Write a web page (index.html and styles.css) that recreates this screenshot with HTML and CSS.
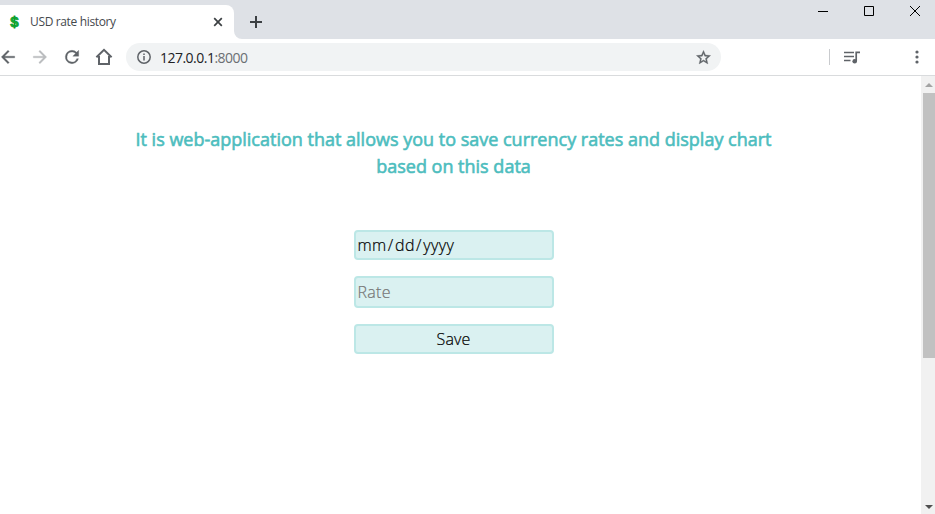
FILE: index.html
```html
<!DOCTYPE html>
<html lang="en">
<head>
<meta charset="utf-8">
<title>USD rate history</title>
<link rel="stylesheet" href="styles.css">
</head>
<body>
<div class="browser">
  <header class="tabstrip">
    <div class="tab">
      <span class="favicon">$</span>
      <span class="tab-title">USD rate history</span>
      <svg class="tab-close" width="10" height="10" viewBox="0 0 10 10"><path d="M1.2 1.2l7.6 7.6M8.8 1.2l-7.6 7.6"/></svg>
    </div>
    <svg class="tab-curve" width="8" height="8" viewBox="0 0 8 8"><path d="M0 0a8 8 0 0 0 8 8H0z"/></svg>
    <svg class="new-tab" width="12" height="12" viewBox="0 0 12 12"><path d="M6 0v12M0 6h12"/></svg>
    <div class="window-controls">
      <svg width="10" height="10" viewBox="0 0 10 10"><path d="M0 5.5h10"/></svg>
      <svg width="10" height="10" viewBox="0 0 10 10"><path d="M.5.5h9v9h-9z"/></svg>
      <svg width="10" height="10" viewBox="0 0 10 10"><path d="M0 0l10 10M10 0L0 10"/></svg>
    </div>
  </header>
  <nav class="toolbar">
    <svg class="icon" width="20" height="20" viewBox="0 0 24 24"><path d="M20 11H7.83l5.59-5.59L12 4l-8 8 8 8 1.41-1.41L7.83 13H20z"/></svg>
    <svg class="icon disabled" width="20" height="20" viewBox="0 0 24 24"><path d="M4 11h12.17l-5.59-5.59L12 4l8 8-8 8-1.41-1.41L16.17 13H4z"/></svg>
    <svg class="icon" width="20" height="20" viewBox="0 0 24 24"><path d="M17.65 6.35A7.96 7.96 0 0 0 12 4a8 8 0 1 0 7.73 10h-2.08A6 6 0 1 1 12 6c1.66 0 3.14.69 4.22 1.78L13 11h7V4z"/></svg>
    <svg class="icon home" width="18" height="18" viewBox="0 0 18 18"><path d="M1.4 9.3L9 1.9l7.6 7.4M4 8v8h10V8"/></svg>
    <div class="address">
      <svg class="info" width="14" height="14" viewBox="0 0 14 14"><circle cx="7" cy="7" r="6.2"/><path d="M7 6v4.5M7 3.5v1.6"/></svg>
      <span class="url">127.0.0.1<span class="port">:8000</span></span>
      <svg class="star" width="17" height="17" viewBox="0 0 24 24"><path d="M22 9.24l-7.19-.62L12 2 9.19 8.63 2 9.24l5.46 4.73L5.82 21 12 17.27 18.18 21l-1.63-7.03zM12 15.4l-3.76 2.27 1-4.28-3.32-2.88 4.38-.38L12 6.1l1.71 4.04 4.38.38-3.32 2.88 1 4.28z"/></svg>
    </div>
    <span class="divider"></span>
    <svg class="media" width="16" height="13" viewBox="0 0 16 13"><path d="M0 1.5h10M0 5.5h10M0 9.5h6.5M12.2 10V1.3H16"/><circle cx="10.7" cy="10.2" r="2.3"/></svg>
    <svg class="menu" width="4" height="14" viewBox="0 0 4 14"><circle cx="2" cy="2" r="1.6"/><circle cx="2" cy="7" r="1.6"/><circle cx="2" cy="12" r="1.6"/></svg>
  </nav>
  <div class="viewport">
    <main class="page">
      <h1 class="heading">It is web-application that allows you to save currency rates and display chart<br>based on this data</h1>
      <form class="form">
        <div class="field date">mm<span class="slash">/</span>dd<span class="slash">/</span>yyyy</div>
        <input class="field rate" type="text" placeholder="Rate">
        <button class="field save" type="button">Save</button>
      </form>
    </main>
    <div class="scrollbar">
      <svg width="8" height="4" viewBox="0 0 8 4"><path class="up" d="M0 4l4-4 4 4z"/></svg>
      <span class="thumb"></span>
      <svg class="down" width="8" height="4" viewBox="0 0 8 4"><path d="M0 0l4 4 4-4z"/></svg>
    </div>
  </div>
</div>
</body>
</html>
```
FILE: styles.css
```css
* { box-sizing: border-box; }
body { margin: 0; background: #fff; font-family: "Open Sans", sans-serif; overflow: hidden; }
svg { display: block; flex: none; }
.browser { display: flex; flex-direction: column; width: 935px; height: 514px; }

.tabstrip { display: flex; height: 39px; padding-top: 5px; background: #dee1e6; }
.tab { display: flex; align-items: center; width: 234px; height: 34px; padding: 0 11px 0 8px; background: #fff; border-radius: 0 8px 0 0; }
.favicon { width: 13px; margin-right: 9px; text-align: center; font: bold 15px/18px "Liberation Sans", sans-serif; color: #10b436; -webkit-text-stroke: 0.8px #0b9a2c; }
.tab-title { flex: 1; font-size: 12px; line-height: 16px; letter-spacing: -0.35px; color: #45494d; white-space: nowrap; }
.tab-close { fill: none; stroke: #3c4043; stroke-width: 1.7; }
.tab-curve { align-self: flex-end; fill: #fff; }
.new-tab { margin: 11px 0 0 8px; fill: none; stroke: #3c4043; stroke-width: 2; }
.window-controls { display: flex; gap: 36px; margin: 1px 15px 0 auto; fill: none; stroke: #000; stroke-width: 1; }

.toolbar { display: flex; align-items: center; height: 37px; border-bottom: 1px solid #d9dbdd; background: #fff; }
.icon { margin-right: 12px; fill: #5f6368; stroke: #5f6368; stroke-width: 0.4; }
.icon:first-child { margin-left: -2px; }
.disabled { fill: #babcbe; stroke: #babcbe; }
.home { margin: 0 13px 0 1px; fill: none; stroke: #5f6368; stroke-width: 2; }
.address { display: flex; align-items: center; width: 595px; height: 28px; padding: 0 9px 0 11px; border-radius: 14px; background: #f1f3f4; }
.info { fill: none; stroke: #5f6368; stroke-width: 1.5; }
.url { flex: 1; margin-left: 9px; font-size: 14px; letter-spacing: -0.52px; color: #202124; }
.port { color: #6b6f73; }
.star { fill: #5f6368; stroke: #5f6368; stroke-width: 0.5; }
.divider { width: 1px; height: 16px; margin-left: 108px; background: #c9cbce; }
.media { margin-left: 14px; fill: #5f6368; stroke: #5f6368; stroke-width: 1.7; }
.media path { fill: none; }
.media circle { stroke: none; }
.menu { margin-left: 55px; fill: #5f6368; }

.viewport { display: flex; flex: 1; }
.page { flex: 1; padding: 50px 14px 0 0; text-align: center; }
.heading { margin: 0; font-size: 18px; line-height: 27px; font-weight: 400; color: #4dbdbe; -webkit-text-stroke: 0.6px #4dbdbe; }
.form { display: flex; flex-direction: column; align-items: center; gap: 16px; margin-top: 50px; }
.field { width: 200px; height: 30px; padding: 0 2px; border: 2px solid #bce7e6; border-radius: 4px; background: #daf1f1; color: #000; font: 300 16px/26px "Open Sans", sans-serif; -webkit-text-stroke: 0.2px; }
.date { text-align: left; letter-spacing: 0.45px; }
.slash { padding: 0 1.2px; }
.rate { height: 32px; letter-spacing: 0.3px; }
.rate::placeholder { color: #757575; opacity: 1; }
.save { text-align: center; letter-spacing: 0.15px; }

.scrollbar { display: flex; flex-direction: column; align-items: center; width: 14px; padding: 7px 0 5px 2px; background: #f1f1f1; fill: #505050; }
.up { fill: #a3a3a3; }
.thumb { width: 12px; height: 265px; margin-top: 6px; background: #c1c1c1; }
.down { margin-top: auto; }
```
